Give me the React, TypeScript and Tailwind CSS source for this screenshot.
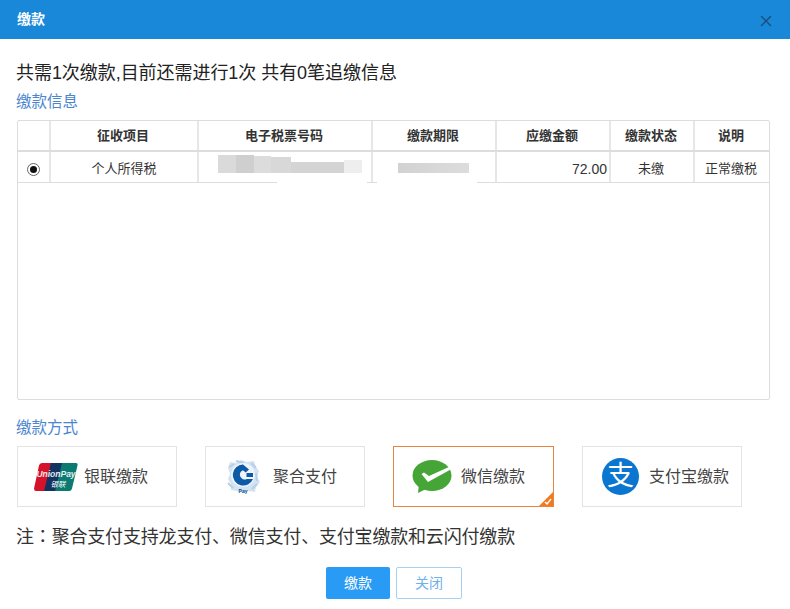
import React from 'react';
import { X } from 'lucide-react';

const COLS = [
  { label: '', width: 'w-[33px]' },
  { label: '征收项目', width: 'w-[148px]' },
  { label: '电子税票号码', width: 'w-[174px]' },
  { label: '缴款期限', width: 'w-[124px]' },
  { label: '应缴金额', width: 'w-[114px]' },
  { label: '缴款状态', width: 'w-[84px]' },
  { label: '说明', width: 'flex-1' },
];

const UnionPayLogo = () => (
  <svg width="44" height="28" viewBox="0 0 44 28">
    <path d="M8 0h13l-7 28H2q-2 0-2-2.500L5 2.500Q5.500 0 8 0z" fill="#d5122b" />
    <path d="M17 0h14l-7 28H10z" fill="#10335f" />
    <path d="M28 0h14q2 0 1.500 2.500L38 25.500Q37.500 28 35 28H21z" fill="#0a7a72" />
    <text x="22" y="14" fontSize="8.500" fontStyle="italic" fontWeight="700" fill="#ffffff" textAnchor="middle" fontFamily="Liberation Sans, sans-serif" opacity="0.9">UnionPay</text>
    <text x="24" y="24" fontSize="7.500" fontStyle="italic" fill="#ffffff" textAnchor="middle" fontFamily="Noto Sans CJK SC, sans-serif">银联</text>
  </svg>
);

const CcbLogo = () => (
  <svg width="34" height="36" viewBox="0 0 34 36">
    <path d="M4 3l6 1 5-3 6 2 7-1 2 6 3 4-2 6 3 5-4 5-1 5-7-1-5 2-6-2-6-1 0-6-3-5 2-5-2-6z" fill="#d3e3f2" />
    <path d="M3 8l5-3M25 4l5 5M2 24l5 5M26 30l5-5M10 2l8 2M30 14l1 8" stroke="#b7d0e8" strokeWidth="2" fill="none" />
    <circle cx="17" cy="16" r="12" fill="#eef4fa" />
    <path d="M17 5.500A10.500 10.500 0 1 0 27 20h-6.200A4.800 4.800 0 1 1 17 11.200z" fill="#0d5aa7" />
    <path d="M17 5.500l6 5-3.200 3L14 9z" fill="#0d5aa7" />
    <path d="M20.500 14h6.500v4h-6.500z" fill="#0d5aa7" />
    <text x="17" y="33.500" fontSize="5" fontWeight="700" fill="#0d4f91" textAnchor="middle" fontFamily="Liberation Sans, sans-serif">Pay</text>
  </svg>
);

const WechatLogo = () => (
  <svg width="40" height="34" viewBox="0 0 40 34">
    <ellipse cx="20" cy="15.500" rx="19.500" ry="15.500" fill="#46a537" />
    <path d="M7 24l-1 9 10-5z" fill="#46a537" />
    <path d="M9.500 14l2.500-1.500 5 3.500L38 6.500l1.500 2.500L16 22z" fill="#ffffff" />
  </svg>
);

const AlipayLogo = () => (
  <div className="w-[37px] h-[37px] rounded-full bg-[#0b76cf] flex items-center justify-center text-white text-[27px] leading-none font-normal">
    支
  </div>
);

const METHODS = [
  { label: '银联缴款', logo: <UnionPayLogo />, width: 'w-[160px]', gap: 'gap-[6px]', pl: 'pl-[16px]', selected: false },
  { label: '聚合支付', logo: <CcbLogo />, width: 'w-[160px]', gap: 'gap-[13px]', pl: 'pl-[20px]', selected: false },
  { label: '微信缴款', logo: <WechatLogo />, width: 'w-[161px]', gap: 'gap-[9px]', pl: 'pl-[18px]', selected: true },
  { label: '支付宝缴款', logo: <AlipayLogo />, width: 'w-[160px]', gap: 'gap-[10px]', pl: 'pl-[19px]', selected: false },
];

export default function App() {
  return (
    <div className="w-[790px] h-[609px] bg-white overflow-hidden font-['Liberation_Sans','Noto_Sans_CJK_SC',sans-serif]">
      <div className="h-[39px] bg-[#1a88d9] flex items-center justify-between pl-[17px] pr-[15px]">
        <span className="text-white text-[14px] font-bold">缴款</span>
        <X size={18} strokeWidth={2} className="text-[#18527f] mt-[3px]" />
      </div>

      <div className="pl-[17px] pr-[20px]">
        <p className="mt-[22px] -ml-[1px] text-[18px] leading-[24px] text-[#222] tracking-[-0.05px]">共需1次缴款,目前还需进行1次 共有0笔追缴信息</p>
        <h3 className="mt-[5px] -ml-[1px] text-[15.5px] leading-[24px] text-[#4a86cf]">缴款信息</h3>

        {/* Table */}
        <div className="mt-[6px] h-[280px] border border-[#dddddd] rounded-[2px] text-[13px] text-[#333]">
          <div className="flex h-[31px] border-b-2 border-[#dddddd] font-bold">
            {COLS.map((col, i) => (
              <div key={i} className={`${col.width} flex items-center justify-center pr-[2px] border-r-2 border-[#e6e6e6] last:border-r-0`}>
                {col.label}
              </div>
            ))}
          </div>
          <div className="relative flex h-[31px] border-b border-[#dddddd]">
            <div className="w-[33px] flex items-center justify-center pt-[4px] border-r-2 border-[#e6e6e6]">
              <span className="w-[13px] h-[13px] rounded-full border border-[#666] flex items-center justify-center">
                <span className="w-[7px] h-[7px] rounded-full bg-[#111]" />
              </span>
            </div>
            <div className="w-[148px] flex items-center justify-center pt-[4px] border-r-2 border-[#e6e6e6]">个人所得税</div>
            {/* blurred-out ticket number */}
            <div className="w-[174px] flex items-end pl-[19px] pb-[9px] border-r-2 border-[#e6e6e6]">
              <div className="w-[18px] h-[18px] bg-[#dadada]" />
              <div className="w-[18px] h-[18px] bg-[#cfcfcf]" />
              <div className="w-[17px] h-[17px] bg-[#dcdcdc]" />
              <div className="w-[20px] h-[16px] bg-[#d8d8d8]" />
              <div className="w-[53px] h-[11px] bg-[#d4d4d4]" />
              <div className="w-[18px] h-[13px] bg-[#eeeeee]" />
            </div>
            <div className="w-[124px] flex items-end pl-[25px] pb-[9px] border-r-2 border-[#e6e6e6]">
              <div className="w-[71px] h-[10px] bg-gradient-to-r from-[#d2d2d2] to-[#dcdcdc]" />
            </div>
            <div className="w-[114px] flex items-center justify-end pt-[4px] pr-[2px] border-r-2 border-[#e6e6e6] text-[14px]">72.00</div>
            <div className="w-[84px] flex items-center justify-center pt-[4px] pr-[2px] border-r-2 border-[#e6e6e6]">未缴</div>
            <div className="flex-1 flex items-center justify-center pt-[4px] pr-[2px]">正常缴税</div>
            {/* smudges left by the blur over the row border */}
            <div className="absolute left-[259px] -bottom-[1px] w-[90px] h-[2px] bg-white" />
            <div className="absolute left-[359px] -bottom-[1px] w-[100px] h-[2px] bg-white" />
          </div>
        </div>

        <h3 className="mt-[16px] -ml-[1px] text-[15.5px] leading-[24px] text-[#4a86cf]">缴款方式</h3>

        {/* Payment methods */}
        <div className="mt-[6px] flex gap-[28px]">
          {METHODS.map((m) => (
            <div
              key={m.label}
              className={`relative ${m.width} h-[61px] flex items-center ${m.gap} ${m.pl} border ${m.selected ? 'border-[#e8853f]' : 'border-[#e3e3e3]'}`}
            >
              <span className="shrink-0 flex items-center">{m.logo}</span>
              <span className="text-[16px] text-[#444] whitespace-nowrap">{m.label}</span>
              {m.selected && (
                <svg className="absolute right-0 bottom-0" width="14" height="14" viewBox="0 0 14 14">
                  <path d="M14 0v14H0z" fill="#f07a20" />
                  <path d="M6 10l2 2 4-5" fill="none" stroke="#ffffff" strokeWidth="1.3" />
                </svg>
              )}
            </div>
          ))}
        </div>

        <p className="mt-[15px] -ml-[1px] text-[18px] leading-[26px] text-[#333] tracking-[-0.18px]">
          注<span className="font-['Noto_Sans_CJK_TC',sans-serif]">：</span>聚合支付支持龙支付、微信支付、支付宝缴款和云闪付缴款
        </p>

        <div className="mt-[17px] flex justify-center gap-[6px] pl-[1px]">
          <button className="w-[64px] h-[32px] rounded-[2px] bg-[#2a9bf5] text-white text-[14px]">缴款</button>
          <button className="w-[66px] h-[32px] rounded-[2px] border border-[#a6d0f2] bg-white text-[#6fb1ea] text-[14px]">关闭</button>
        </div>
      </div>
    </div>
  );
}
